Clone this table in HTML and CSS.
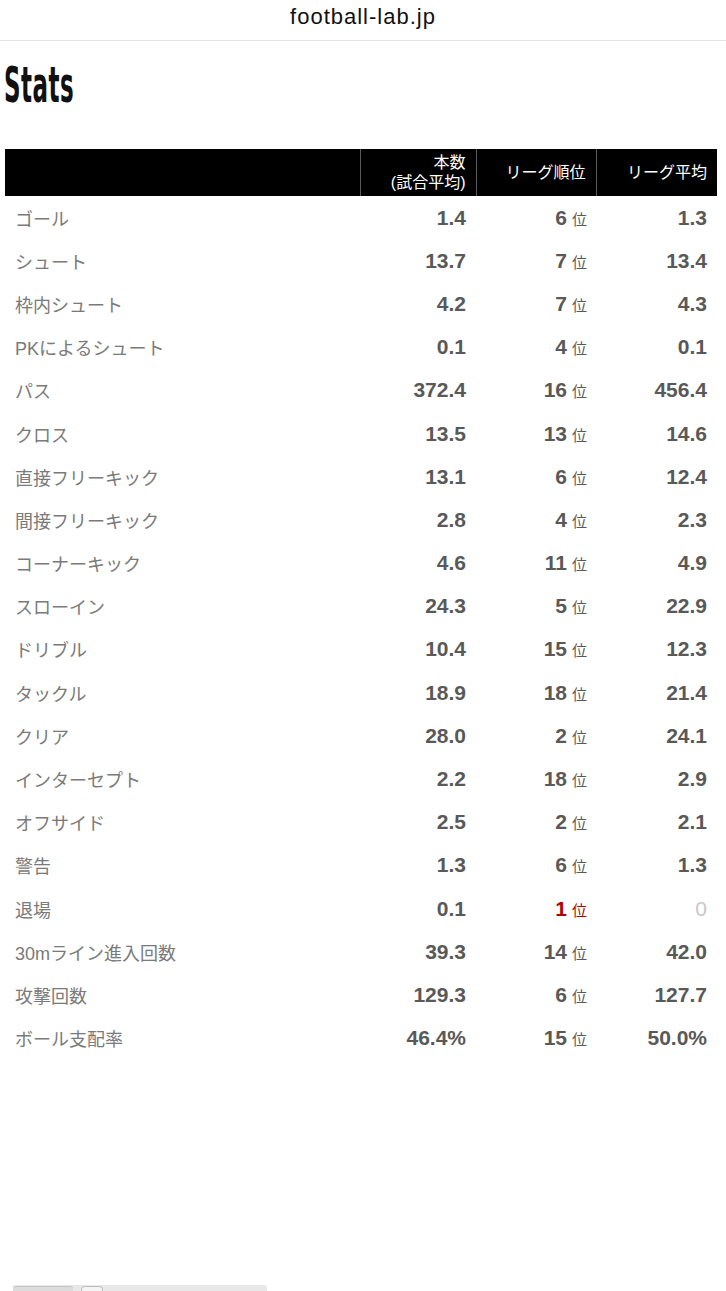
FILE: index.html
```html
<!DOCTYPE html>
<html lang="ja">
<head>
<meta charset="utf-8">
<link rel="stylesheet" href="styles.css">
</head>
<body>
<div class="page">
  <header class="urlbar">football-lab.jp</header>
  <h1 class="title"><span>Stats</span></h1>
  <table class="stats">
    <thead>
      <tr>
        <th class="c-label"></th>
        <th class="c-val">本数<br>(試合平均)</th>
        <th class="c-rank">リーグ順位</th>
        <th class="c-avg">リーグ平均</th>
      </tr>
    </thead>
    <tbody>
      <tr><td class="c-label">ゴール</td><td class="c-val">1.4</td><td class="c-rank">6<span class="i">位</span></td><td class="c-avg">1.3</td></tr>
      <tr><td class="c-label">シュート</td><td class="c-val">13.7</td><td class="c-rank">7<span class="i">位</span></td><td class="c-avg">13.4</td></tr>
      <tr><td class="c-label">枠内シュート</td><td class="c-val">4.2</td><td class="c-rank">7<span class="i">位</span></td><td class="c-avg">4.3</td></tr>
      <tr><td class="c-label">PKによるシュート</td><td class="c-val">0.1</td><td class="c-rank">4<span class="i">位</span></td><td class="c-avg">0.1</td></tr>
      <tr><td class="c-label">パス</td><td class="c-val">372.4</td><td class="c-rank">16<span class="i">位</span></td><td class="c-avg">456.4</td></tr>
      <tr><td class="c-label">クロス</td><td class="c-val">13.5</td><td class="c-rank">13<span class="i">位</span></td><td class="c-avg">14.6</td></tr>
      <tr><td class="c-label">直接フリーキック</td><td class="c-val">13.1</td><td class="c-rank">6<span class="i">位</span></td><td class="c-avg">12.4</td></tr>
      <tr><td class="c-label">間接フリーキック</td><td class="c-val">2.8</td><td class="c-rank">4<span class="i">位</span></td><td class="c-avg">2.3</td></tr>
      <tr><td class="c-label">コーナーキック</td><td class="c-val">4.6</td><td class="c-rank">11<span class="i">位</span></td><td class="c-avg">4.9</td></tr>
      <tr><td class="c-label">スローイン</td><td class="c-val">24.3</td><td class="c-rank">5<span class="i">位</span></td><td class="c-avg">22.9</td></tr>
      <tr><td class="c-label">ドリブル</td><td class="c-val">10.4</td><td class="c-rank">15<span class="i">位</span></td><td class="c-avg">12.3</td></tr>
      <tr><td class="c-label">タックル</td><td class="c-val">18.9</td><td class="c-rank">18<span class="i">位</span></td><td class="c-avg">21.4</td></tr>
      <tr><td class="c-label">クリア</td><td class="c-val">28.0</td><td class="c-rank">2<span class="i">位</span></td><td class="c-avg">24.1</td></tr>
      <tr><td class="c-label">インターセプト</td><td class="c-val">2.2</td><td class="c-rank">18<span class="i">位</span></td><td class="c-avg">2.9</td></tr>
      <tr><td class="c-label">オフサイド</td><td class="c-val">2.5</td><td class="c-rank">2<span class="i">位</span></td><td class="c-avg">2.1</td></tr>
      <tr><td class="c-label">警告</td><td class="c-val">1.3</td><td class="c-rank">6<span class="i">位</span></td><td class="c-avg">1.3</td></tr>
      <tr><td class="c-label">退場</td><td class="c-val">0.1</td><td class="c-rank top">1<span class="i">位</span></td><td class="c-avg zero">0</td></tr>
      <tr><td class="c-label">30mライン進入回数</td><td class="c-val">39.3</td><td class="c-rank">14<span class="i">位</span></td><td class="c-avg">42.0</td></tr>
      <tr><td class="c-label">攻撃回数</td><td class="c-val">129.3</td><td class="c-rank">6<span class="i">位</span></td><td class="c-avg">127.7</td></tr>
      <tr><td class="c-label">ボール支配率</td><td class="c-val">46.4%</td><td class="c-rank">15<span class="i">位</span></td><td class="c-avg">50.0%</td></tr>
    </tbody>
  </table>
  <div class="hscroll">
    <div class="hscroll-thumb"></div>
    <div class="hscroll-knob"></div>
  </div>
</div>
</body>
</html>
```

FILE: styles.css
```css
html, body {
  margin: 0;
  padding: 0;
  background: #fff;
}
body {
  font-family: "Liberation Sans", "Noto Sans CJK JP", sans-serif;
}
.page {
  min-height: 1291px;
  display: flex;
  flex-direction: column;
}
.urlbar {
  height: 41px;
  border-bottom: 1px solid #e4e4e4;
  display: flex;
  align-items: center;
  justify-content: center;
  font-size: 22px;
  letter-spacing: 1px;
  color: #111;
  box-sizing: border-box;
  padding-bottom: 6px;
}
.title {
  margin: 0;
  height: 108px;
  padding-left: 4px;
  box-sizing: border-box;
  font-family: "DejaVu Sans", sans-serif;
  font-weight: bold;
  font-size: 50px;
  line-height: 1;
  color: #111;
  padding-top: 19px;
}
.title span {
  display: inline-block;
  transform: scaleX(0.46);
  transform-origin: left center;
  letter-spacing: 1px;
}
.stats {
  margin: 0 9px 0 5px;
  width: 712px;
  border-collapse: collapse;
  table-layout: fixed;
  font-family: "Liberation Sans", "Noto Sans CJK JP", sans-serif;
}
.stats th {
  background: #000;
  color: #fff;
  font-weight: normal;
  font-size: 16px;
  line-height: 20px;
  height: 47px;
  padding: 0 10px 0 0;
  text-align: right;
  border-left: 1px solid #5a5a5a;
  box-sizing: border-box;
}
.stats th.c-label {
  border-left: none;
}
.stats th.c-val {
  padding-top: 1px;
}
.stats .c-label { width: 355px; }
.stats .c-val { width: 116px; }
.stats .c-rank { width: 120px; }
.stats .c-avg { width: 121px; }
.stats td {
  height: 43.2px;
  padding: 0 10px 0 0;
  text-align: right;
  font-weight: bold;
  font-size: 21px;
  color: #595959;
  vertical-align: middle;
}
.stats td.c-label {
  text-align: left;
  padding-left: 10px;
  font-weight: normal;
  font-size: 18px;
  color: #7a7a7a;
}
.stats td.c-rank {
  padding-right: 9px;
}
.stats .i {
  font-size: 15px;
  font-weight: normal;
  margin-left: 5px;
  color: #595959;
}
.stats td.top, .stats td.top .i {
  color: #b30000;
}
.stats td.zero {
  font-weight: normal;
  color: #c8c8c8;
}
.hscroll {
  margin-top: auto;
  margin-left: 13px;
  width: 254px;
  height: 6px;
  background: #e8e8e8;
  border-radius: 3px 3px 0 0;
  display: flex;
  gap: 8px;
}
.hscroll-thumb {
  width: 60px;
  height: 5px;
  margin-top: 1px;
  border-top: 1px solid #c4c4c4;
  border-radius: 3px 3px 0 0;
  background: #dcdcdc;
  box-sizing: border-box;
}
.hscroll-knob {
  width: 22px;
  height: 5px;
  margin-top: 1px;
  border: 1px solid #bdbdbd;
  border-bottom: none;
  border-radius: 4px 4px 0 0;
  background: #f4f4f4;
  box-sizing: border-box;
}
```
